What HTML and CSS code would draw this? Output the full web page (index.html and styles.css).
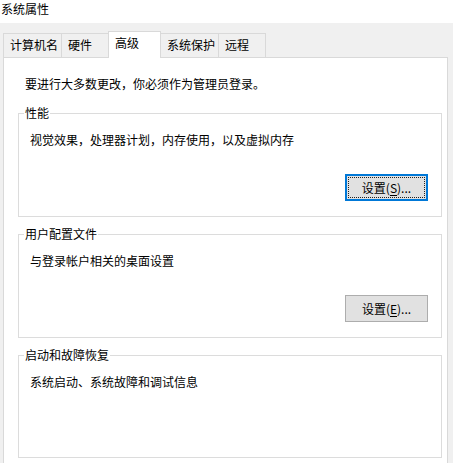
FILE: index.html
```html
<!DOCTYPE html>
<html lang="zh-CN">
<head>
<meta charset="utf-8">
<title>系统属性</title>
<link rel="stylesheet" href="styles.css">
</head>
<body>
<div class="window">
  <div class="title">系统属性</div>
  <div class="tabstrip">
    <div class="tab">计算机名</div>
    <div class="tab">硬件</div>
    <div class="tab active">高级</div>
    <div class="tab">系统保护</div>
    <div class="tab">远程</div>
  </div>
  <div class="panel">
    <p class="notice">要进行大多数更改，你必须作为管理员登录。</p>
    <fieldset class="group">
      <legend>性能</legend>
      <p class="desc">视觉效果，处理器计划，内存使用，以及虚拟内存</p>
      <div class="actions"><button class="btn focused">设置(<u>S</u>)...</button></div>
    </fieldset>
    <fieldset class="group">
      <legend>用户配置文件</legend>
      <p class="desc">与登录帐户相关的桌面设置</p>
      <div class="actions"><button class="btn">设置(<u>E</u>)...</button></div>
    </fieldset>
    <fieldset class="group plain">
      <legend>启动和故障恢复</legend>
      <p class="desc">系统启动、系统故障和调试信息</p>
    </fieldset>
  </div>
</div>
</body>
</html>
```
FILE: styles.css
```css
* { box-sizing: border-box; }
html, body { margin: 0; padding: 0; }
body {
  font-family: "Noto Sans CJK SC", "Noto Sans", sans-serif;
  font-size: 12px;
  color: #000;
  background: #f0f0f0;
  width: 453px;
  height: 463px;
  overflow: hidden;
}
.window { display: flex; flex-direction: column; }
.title {
  height: 23px;
  line-height: 18px;
  padding-left: 1px;
  background: #fff;
}
.tabstrip {
  height: 34px;
  display: flex;
  align-items: flex-end;
  padding-left: 3px;
  background: #f0f0f0;
}
.tab {
  height: 24px;
  line-height: 22px;
  padding: 0 3px 0 6px;
  min-width: 48px;
  border: 1px solid #d9d9d9;
  border-bottom: none;
  margin-right: -1px;
  background: #f0f0f0;
  white-space: nowrap;
}
.tab.active {
  height: 27px;
  margin-bottom: -1px;
  min-width: 53px;
  background: #fff;
  position: relative;
  z-index: 1;
}
.panel {
  margin-left: 3px;
  width: 445px;
  height: 420px;
  background: #fff;
  border-top: 1px solid #d9d9d9;
  border-left: 1px solid #d9d9d9;
  border-right: 1px solid #d9d9d9;
  padding: 18px 0 0 14px;
}
.notice {
  margin: 0 0 14px 7px;
  line-height: 16px;
}
.group {
  margin: 0 0 10px 0;
  padding: 0 13px 15px 0;
  width: 424px;
  border: 1px solid #dcdcdc;
  min-inline-size: 0;
}
.group legend {
  margin-left: 5px;
  padding: 0 1px;
  line-height: 14px;
}
.desc {
  margin: 12px 0 0 11px;
  line-height: 16px;
}
.actions {
  display: flex;
  justify-content: flex-end;
  margin-top: 26px;
}
.group.plain { padding-bottom: 67px; }
.btn {
  width: 83px;
  height: 27px;
  font: inherit;
  color: #000;
  background: #e1e1e1;
  border: 1px solid #adadad;
  padding: 0;
  line-height: 16px;
}
.btn.focused {
  border: 2px solid #0078d7;
  outline: 1px dotted #222;
  outline-offset: -4px;
}
.btn u { text-underline-offset: 2px; }
```
